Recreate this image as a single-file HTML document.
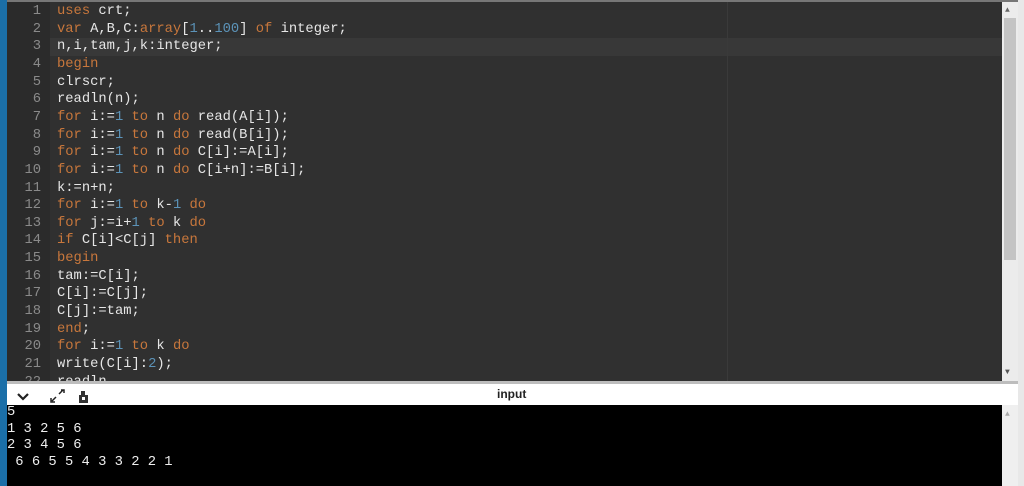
<html><head><style>
body{margin:0;width:1024px;height:486px;background:#e8e8e8;position:relative;overflow:hidden;font-family:"Liberation Mono",monospace}
#blue{position:absolute;left:0;top:0;width:7px;height:486px;background:#1b6fa8}
#ed{position:absolute;left:7px;top:2px;width:995px;height:379px;background:#303030;overflow:hidden}
#top{position:absolute;left:0;top:0;width:1018px;height:2px;background:#777}
#gut{position:absolute;left:0;top:0;width:43px;height:100%;background:#2b2b2b}
.cl{position:absolute;left:43px;top:36px;width:952px;height:18px;background:#383838}
.ln{position:absolute;left:0;width:34px;text-align:right;color:#8a8a8a;font-size:13.8px}
.c{position:absolute;left:50px;color:#e6e6e6;font-size:13.8px;white-space:pre}
.k{color:#c8773c}.n{color:#5c93b8}
#sb{position:absolute;left:1002px;top:2px;width:16px;height:379px;background:#ececec}
#th{position:absolute;left:1004px;top:18px;width:12px;height:242px;background:#c4c4c4}
#bar{position:absolute;left:7px;top:381px;width:1011px;height:24px;background:#fff;border-top:3px solid #bdbdbd;box-sizing:border-box}
#out{position:absolute;left:7px;top:405px;width:995px;height:81px;background:#000;color:#eee;font-size:13.8px;line-height:16.5px;white-space:pre}
#sb2{position:absolute;left:1002px;top:405px;width:16px;height:81px;background:#efefef}
</style></head><body>
<div id="top"></div><div id="blue"></div>
<div id="ed"><div id="gut"></div><div class="cl"></div>
<div style="position:absolute;left:720px;top:0;width:1px;height:100%;background:#3a3a3a"></div>
<div id="code"></div>
</div>
<div id="sb"></div><div id="th"></div>
<div style="position:absolute;left:1005px;top:6px;font-size:8px;color:#666">▲</div>
<div style="position:absolute;left:1005px;top:368px;font-size:8px;color:#555">▼</div>
<div id="bar">
<svg style="position:absolute;left:8px;top:5px" width="80" height="16"><path d="M3 5l5 5 5-5" stroke="#222" stroke-width="2.2" fill="none"/><path d="M37 12l4-4M44 5l4-4M36 9v4h4M49 4v-3h-3" stroke="#222" stroke-width="1.5" fill="none"/><rect x="64" y="6" width="9" height="8" fill="#333"/><rect x="66" y="2" width="4" height="5" fill="#333"/><rect x="67" y="8" width="3" height="3" fill="#fff"/></svg>
<div style="position:absolute;left:490px;top:3px;font-family:'Liberation Sans',sans-serif;font-size:12px;font-weight:bold;color:#222">input</div>
</div>
<div id="out">5
1 3 2 5 6
2 3 4 5 6
 6 6 5 5 4 3 3 2 2 1</div>
<div id="sb2"></div>
<div style="position:absolute;left:1005px;top:410px;font-size:8px;color:#aaa">▲</div>
<script>
var L=['<span class="k">uses</span> crt;','<span class="k">var</span> A,B,C:<span class="k">array</span>[<span class="n">1</span>..<span class="n">100</span>] <span class="k">of</span> integer;','n,i,tam,j,k:integer;','<span class="k">begin</span>','clrscr;','readln(n);','<span class="k">for</span> i:=<span class="n">1</span> <span class="k">to</span> n <span class="k">do</span> read(A[i]);','<span class="k">for</span> i:=<span class="n">1</span> <span class="k">to</span> n <span class="k">do</span> read(B[i]);','<span class="k">for</span> i:=<span class="n">1</span> <span class="k">to</span> n <span class="k">do</span> C[i]:=A[i];','<span class="k">for</span> i:=<span class="n">1</span> <span class="k">to</span> n <span class="k">do</span> C[i+n]:=B[i];','k:=n+n;','<span class="k">for</span> i:=<span class="n">1</span> <span class="k">to</span> k-<span class="n">1</span> <span class="k">do</span>','<span class="k">for</span> j:=i+<span class="n">1</span> <span class="k">to</span> k <span class="k">do</span>','<span class="k">if</span> C[i]&lt;C[j] <span class="k">then</span>','<span class="k">begin</span>','tam:=C[i];','C[i]:=C[j];','C[j]:=tam;','<span class="k">end</span>;','<span class="k">for</span> i:=<span class="n">1</span> <span class="k">to</span> k <span class="k">do</span>','write(C[i]:<span class="n">2</span>);','readln'];
var h='';for(var i=0;i<L.length;i++){var t=i*17.65+2;h+='<div class="ln" style="top:'+t+'px">'+(i+1)+'</div><div class="c" style="top:'+t+'px">'+L[i]+'</div>';}
document.getElementById('code').innerHTML=h;
</script>
</body></html>
